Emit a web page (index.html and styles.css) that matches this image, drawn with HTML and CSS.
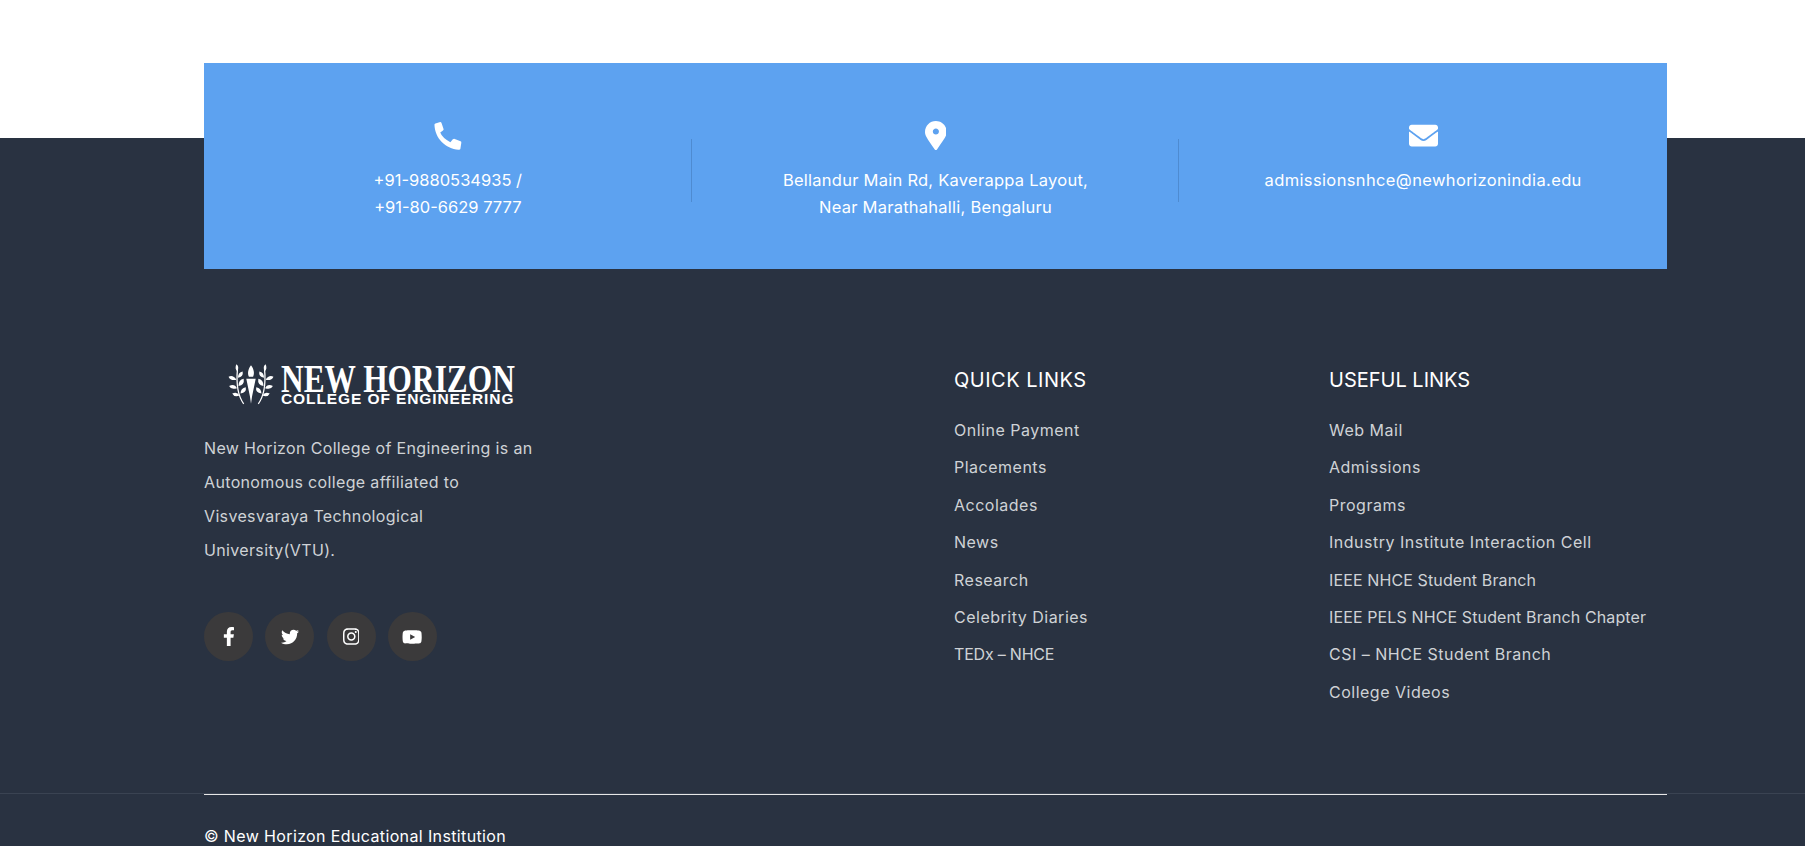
FILE: index.html
```html
<!DOCTYPE html>
<html lang="en">

<head>
    <meta charset="UTF-8">
    <meta name="viewport" content="width=device-width, initial-scale=1.0">
    <title>New Horizon College of Engineering</title>
    <link rel="stylesheet" href="styles.css">
</head>

<body>

    <div class="top-band"></div>

    <footer class="site-footer">

        <section class="contact-card">
            <div class="contact-item">
                <svg class="contact-icon" viewBox="-1 0 30 30"><path d="M1.500 2.500L6.500 1Q7.500 1 8 2.500L10 8.500Q10 9.500 9 10L6.500 12Q8.500 17.500 17 22L19.500 19Q20.500 18 21.500 18.500L27.500 21Q28.500 21.500 28.300 22.500L27.300 29Q27 30 25.500 29.800C12 29 1 18 .5 4Q.5 3 1.500 2.500Z"/></svg>
                <p class="phone-text">+91-9880534935 /<br>+91-80-6629 7777</p>
            </div>
            <div class="contact-item">
                <svg class="contact-icon" viewBox="0 0 384 512"><path fill-rule="evenodd" d="M172.268 501.67C26.97 291.031 0 253.673 0 192 0 85.961 85.961 0 192 0s192 85.961 192 192c0 61.673-26.97 99.031-172.268 309.67-9.535 13.774-29.93 13.773-39.464 0zM192 240c30 0 54-24 54-54s-24-54-54-54-54 24-54 54 24 54 54 54z"/></svg>
                <p class="address-text">Bellandur Main Rd, Kaverappa Layout,<br>Near Marathahalli, Bengaluru</p>
            </div>
            <div class="contact-item">
                <svg class="contact-icon" viewBox="0 0 512 512"><path d="M502.3 190.8c3.9-3.1 9.7-.2 9.7 4.7V400c0 26.5-21.5 48-48 48H48c-26.5 0-48-21.5-48-48V195.6c0-5 5.7-7.8 9.7-4.7 22.4 17.4 52.1 39.5 154.1 113.6 21.1 15.4 56.7 47.8 92.2 47.6 35.7.3 72-32.8 92.3-47.6 102-74.1 131.6-96.3 154-113.7zM256 320c23.2.4 56.6-29.2 73.4-41.4 132.7-96.3 142.8-104.7 173.4-128.7 5.8-4.5 9.2-11.5 9.2-18.9v-19c0-26.5-21.5-48-48-48H48C21.5 64 0 85.5 0 112v19c0 7.4 3.4 14.3 9.2 18.9 30.6 23.9 40.7 32.4 173.4 128.7 16.8 12.2 50.2 41.8 73.4 41.4z"/></svg>
                <p>admissionsnhce@newhorizonindia.edu</p>
            </div>
        </section>

        <section class="footer-widgets">
            <div class="about">
                <div class="logo">
                    <svg class="logo-mark" viewBox="0 0 46 40">
                        <path d="M23 2C26 6 26.500 10 25 13H21C19.500 10 20 6 23 2ZM18.500 15H27.500L24 32 23 39 22 32Z"/>
                        <g id="branch">
                            <path class="stem" d="M16 39Q8 28 10 6"/>
                            <path d="M9 16Q3 17 1.500 13 6 11 9 16ZM9.500 24Q4 26 2 22 7 19 9.500 24ZM12 31Q7 33 5 29 10 27 12 31ZM10.500 14Q10.500 9 15 8 16 13 10.500 14ZM11 22Q11 16 16 15 17 21 11 22ZM13 29Q13 24 18 23 19 28 13 29ZM10 8Q7 5 9 1 12 3 10 8Z"/>
                        </g>
                        <use href="#branch" transform="matrix(-1 0 0 1 46 0)"/>
                    </svg>
                    <div class="logo-text">
                        <span class="logo-name">NEW HORIZON</span>
                        <span class="logo-sub">COLLEGE OF ENGINEERING</span>
                    </div>
                </div>
                <p class="about-text">New Horizon College of Engineering is an Autonomous college affiliated to Visvesvaraya Technological University(VTU).</p>
                <div class="socials">
                    <a class="social" href="#"><svg class="fb" viewBox="0 0 320 512"><path d="M279.14 288l14.22-92.66h-88.91v-60.13c0-25.35 12.42-50.06 52.24-50.06h40.42V6.26S260.43 0 225.36 0c-73.22 0-121.08 44.38-121.08 124.72v70.62H22.89V288h81.39v224h100.17V288z"/></svg></a>
                    <a class="social" href="#"><svg class="tw" viewBox="0 0 512 512"><path d="M459.37 151.716c.325 4.548.325 9.097.325 13.645 0 138.72-105.583 298.558-298.558 298.558-59.452 0-114.68-17.219-161.137-47.106 8.447.974 16.568 1.299 25.34 1.299 49.055 0 94.213-16.568 130.274-44.832-46.132-.975-84.792-31.188-98.112-72.772 6.498.974 12.995 1.624 19.818 1.624 9.421 0 18.843-1.3 27.614-3.573-48.081-9.747-84.143-51.98-84.143-102.985v-1.299c13.969 7.797 30.214 12.67 47.431 13.319-28.264-18.843-46.781-51.005-46.781-87.391 0-19.492 5.197-37.36 14.294-52.954 51.655 63.675 129.3 105.258 216.365 109.807-1.624-7.797-2.599-15.918-2.599-24.04 0-57.828 46.782-104.934 104.934-104.934 30.213 0 57.502 12.67 76.67 33.137 23.715-4.548 46.456-13.32 66.599-25.34-7.798 24.366-24.366 44.833-46.132 57.827 21.117-2.273 41.584-8.122 60.426-16.243-14.292 20.791-32.161 39.308-52.628 54.253z"/></svg></a>
                    <a class="social" href="#"><svg class="ig" viewBox="0 0 448 512"><path d="M224.1 141c-63.6 0-114.9 51.3-114.9 114.9s51.3 114.9 114.9 114.9S339 319.5 339 255.9 287.7 141 224.1 141zm0 189.6c-41.1 0-74.7-33.5-74.7-74.7s33.5-74.7 74.7-74.7 74.7 33.5 74.7 74.7-33.6 74.7-74.7 74.7zm146.4-194.3c0 14.9-12 26.8-26.8 26.8-14.9 0-26.8-12-26.8-26.8s12-26.8 26.8-26.8 26.8 12 26.8 26.8zm76.1 27.2c-1.7-35.9-9.9-67.7-36.2-93.9-26.2-26.2-58-34.4-93.9-36.2-37-2.1-147.9-2.1-184.9 0-35.8 1.7-67.6 9.9-93.9 36.1s-34.4 58-36.2 93.9c-2.1 37-2.1 147.9 0 184.9 1.7 35.9 9.9 67.7 36.2 93.9s58 34.4 93.9 36.2c37 2.1 147.9 2.1 184.9 0 35.9-1.7 67.7-9.9 93.9-36.2 26.2-26.2 34.4-58 36.2-93.9 2.1-37 2.1-147.8 0-184.8zM398.8 388c-7.8 19.6-22.9 34.7-42.6 42.6-29.5 11.7-99.5 9-132.1 9s-102.7 2.6-132.1-9c-19.6-7.8-34.7-22.9-42.6-42.6-11.7-29.5-9-99.5-9-132.1s-2.6-102.7 9-132.1c7.8-19.6 22.9-34.7 42.6-42.6 29.5-11.7 99.5-9 132.1-9s102.7-2.6 132.1 9c19.6 7.8 34.7 22.9 42.6 42.6 11.7 29.5 9 99.5 9 132.1s2.7 102.7-9 132.1z"/></svg></a>
                    <a class="social" href="#"><svg class="yt" viewBox="0 0 576 512"><path d="M549.655 124.083c-6.281-23.65-24.787-42.276-48.284-48.597C458.781 64 288 64 288 64S117.22 64 74.629 75.486c-23.497 6.322-42.003 24.947-48.284 48.597-11.412 42.867-11.412 132.305-11.412 132.305s0 89.438 11.412 132.305c6.281 23.65 24.787 41.5 48.284 47.821C117.22 448 288 448 288 448s170.78 0 213.371-11.486c23.497-6.321 42.003-24.171 48.284-47.821 11.412-42.867 11.412-132.305 11.412-132.305s0-89.438-11.412-132.305zm-317.51 213.508V175.185l142.739 81.205-142.739 81.201z"/></svg></a>
                </div>
            </div>

            <div class="link-col">
                <h4 class="wide-title">QUICK LINKS</h4>
                <ul>
                    <li><a href="#">Online Payment</a></li>
                    <li><a href="#">Placements</a></li>
                    <li><a href="#">Accolades</a></li>
                    <li><a href="#">News</a></li>
                    <li><a href="#">Research</a></li>
                    <li><a href="#">Celebrity Diaries</a></li>
                    <li class="tight"><a href="#">TEDx – NHCE</a></li>
                </ul>
            </div>

            <div class="link-col">
                <h4>USEFUL LINKS</h4>
                <ul>
                    <li><a href="#">Web Mail</a></li>
                    <li><a href="#">Admissions</a></li>
                    <li><a href="#">Programs</a></li>
                    <li><a href="#">Industry Institute Interaction Cell</a></li>
                    <li class="caps"><a href="#">IEEE NHCE Student Branch</a></li>
                    <li class="caps"><a href="#">IEEE PELS NHCE Student Branch Chapter</a></li>
                    <li><a href="#">CSI – NHCE Student Branch</a></li>
                    <li><a href="#">College Videos</a></li>
                </ul>
            </div>
        </section>

        <section class="footer-bottom">
            <p class="copyright">© New Horizon Educational Institution</p>
        </section>

    </footer>

</body>

</html>
```

FILE: styles.css
```css
* {
    padding: 0;
    margin: 0;
    box-sizing: border-box;
}

html, body {
    height: 846px;
    overflow: hidden;
}

body {
    background-color: #fff;
    font-family: "Inter", "Liberation Sans", sans-serif;
}

a {
    color: inherit;
    text-decoration: none;
}

ul {
    list-style: none;
}

.top-band {
    height: 138px;
}

.site-footer {
    display: flow-root;
    background-color: #293241;
    height: 708px;
}

/* blue card sits half over the white band */
.contact-card {
    display: grid;
    grid-template-columns: repeat(3, 1fr);
    width: 1463px;
    height: 206px;
    margin: -75px 0 0 204px;
    background-color: #5da2f0;
    position: relative;
}

.contact-item {
    padding-top: 58px;
    text-align: center;
    color: #fff;
    font-size: 16.500px;
    letter-spacing: .37px;
    line-height: 27px;
    position: relative;
}

.contact-item + .contact-item::before {
    content: "";
    position: absolute;
    left: -1px;
    top: 76px;
    height: 63px;
    border-left: 1px solid rgba(60, 110, 170, .45);
}

.phone-text {
    letter-spacing: 0;
}

.address-text {
    letter-spacing: .25px;
}

.contact-icon {
    display: block;
    height: 29px;
    margin: 0 auto 17px;
    fill: #fff;
}

.footer-widgets {
    display: grid;
    grid-template-columns: 750px 375px 1fr;
    padding: 93px 0 0 204px;
    height: 524px;
}

.logo {
    display: flex;
    gap: 6px;
    margin-left: 23px;
    height: 44px;
    align-items: center;
    color: #fff;
}

.logo-mark {
    width: 48px;
    height: 42px;
    fill: #fff;
}

.stem {
    fill: none;
    stroke: #fff;
    stroke-width: 1.2;
}

.logo-text {
    display: flex;
    flex-direction: column;
    width: 234px;
}

.logo-name {
    font-family: "Liberation Serif", serif;
    font-weight: bold;
    font-size: 41px;
    line-height: 28px;
    white-space: nowrap;
    transform: scaleX(.765);
    transform-origin: left center;
}

.logo-sub {
    font-family: "Liberation Sans", sans-serif;
    font-weight: bold;
    font-size: 15.500px;
    line-height: 13px;
    letter-spacing: .9px;
    white-space: nowrap;
}

.about-text {
    width: 335px;
    margin-top: 25px;
    color: #cfd2d6;
    font-size: 16px;
    letter-spacing: .35px;
    line-height: 34px;
}

.socials {
    display: flex;
    gap: 12.300px;
    margin-top: 45px;
}

.social {
    display: flex;
    align-items: center;
    justify-content: center;
    width: 49px;
    height: 49px;
    border-radius: 50%;
    background-color: #3b3a3b;
}

.social svg {
    fill: #fff;
}

.fb { height: 19px; }
.tw { height: 18px; }
.ig { height: 19px; }
.yt { height: 18px; }

.link-col h4 {
    color: #fff;
    font-size: 20px;
    font-weight: 400;
    line-height: 30px;
    margin-top: 3px;
    margin-bottom: 17px;
}

.link-col h4.wide-title {
    letter-spacing: .5px;
}

.link-col li {
    color: #cfd2d6;
    font-size: 16px;
    letter-spacing: .5px;
    line-height: 37.4px;
    white-space: nowrap;
}

.link-col li.caps {
    letter-spacing: .12px;
}

.link-col li.tight {
    letter-spacing: -.2px;
}

.footer-bottom {
    border-top: 1px solid #3a4352;
    padding-left: 204px;
}

.copyright {
    width: 1463px;
    border-top: 1px solid #e6e6e6;
    padding-top: 29px;
    color: #fff;
    font-size: 16px;
    letter-spacing: .37px;
    line-height: 24px;
}
```
